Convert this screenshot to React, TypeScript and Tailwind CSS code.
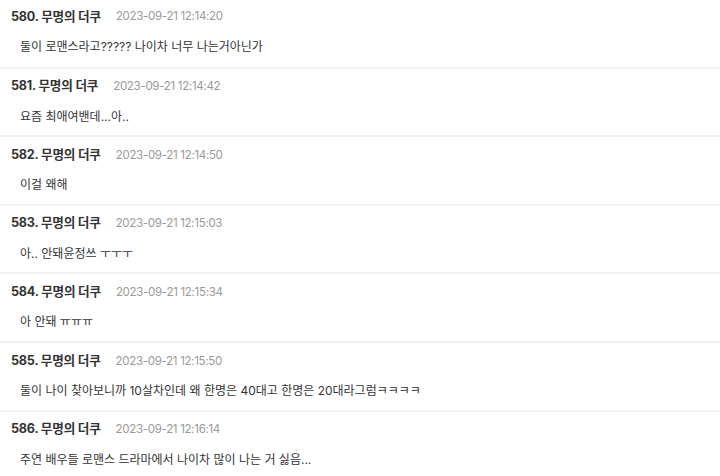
import React from "react";

const rows = [
  { n: 580, t: "2023-09-21 12:14:20", b: "둘이 로맨스라고????? 나이차 너무 나는거아닌가" },
  { n: 581, t: "2023-09-21 12:14:42", b: "요즘 최애여밴데...아.." },
  { n: 582, t: "2023-09-21 12:14:50", b: "이걸 왜해" },
  { n: 583, t: "2023-09-21 12:15:03", b: "아.. 안돼윤정쓰 ㅜㅜㅜ" },
  { n: 584, t: "2023-09-21 12:15:34", b: "아 안돼 ㅠㅠㅠ" },
  { n: 585, t: "2023-09-21 12:15:50", b: "둘이 나이 찾아보니까 10살차인데 왜 한명은 40대고 한명은 20대라그럼ㅋㅋㅋㅋ" },
  { n: 586, t: "2023-09-21 12:16:14", b: "주연 배우들 로맨스 드라마에서 나이차 많이 나는 거 싫음..." },
];

export default function App() {
  return (
    <div
      className="w-[720px] h-[476px] overflow-hidden bg-white"
      style={{ fontFamily: 'Inter, "Noto Sans CJK KR", sans-serif' }}
    >
      {rows.map((r, i) => (
        <div
          key={r.n}
          className={`border-b-2 border-[#f1f1f1] ${i === 0 ? "pt-[8px] pb-[10.5px]" : "pt-[9px] pb-[9.67px]"}`}
        >
          <div className="flex items-center h-[18px] pl-[11px]">
            <span className="text-[12.6px] font-bold text-[#333] tracking-[-0.2px]">
              {r.n}. 무명의 더쿠
            </span>
            <span className="ml-[15px] text-[11.5px] text-[#999] tracking-[-0.3px]">{r.t}</span>
          </div>
          <div className="mt-[12px] h-[18px] flex items-center pl-[20px] text-[12px] text-[#333]">
            {r.b}
          </div>
        </div>
      ))}
    </div>
  );
}
